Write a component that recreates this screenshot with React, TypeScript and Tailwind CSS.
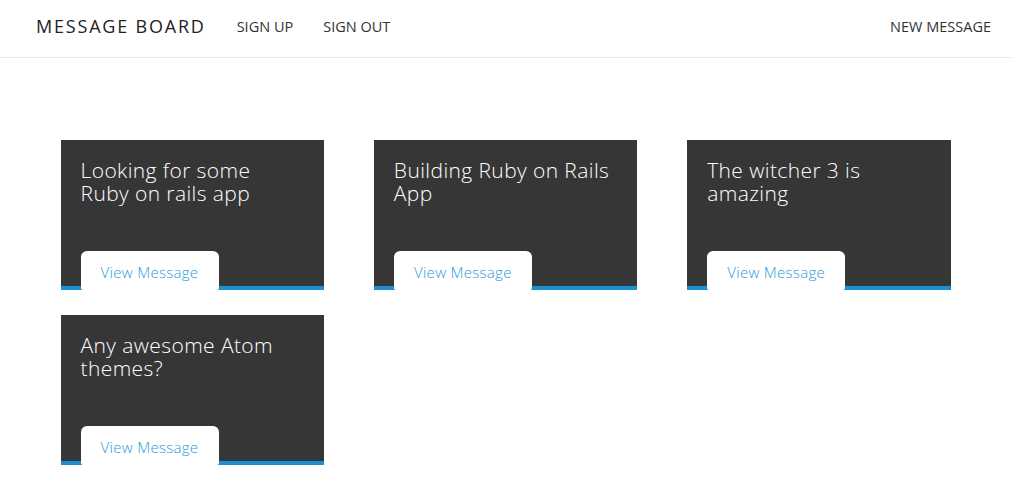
const messages = [
  "Looking for some Ruby on rails app",
  "Building Ruby on Rails App",
  "The witcher 3 is amazing",
  "Any awesome Atom themes?",
];

function MessageCard({ title }: { title: string }) {
  return (
    <div className="h-[150px] bg-[#363636] border-b-4 border-[#1b8fd2] flex flex-col justify-between px-5 pt-[19px]">
      <h2 className="text-[21px] leading-[23px] tracking-[0.4px] font-light text-white">{title}</h2>
      <a className="self-start -mb-1 w-[138px] h-[39px] pt-[3px] bg-white rounded-t-[6px] rounded-b-[2px] flex items-center justify-center text-[15px] tracking-[0.3px] font-light text-[#2a9bd9]">
        View Message
      </a>
    </div>
  );
}

export default function App() {
  return (
    <div className="min-h-screen bg-white" style={{ fontFamily: "'Open Sans', Lato, sans-serif" }}>
      <nav className="h-[58px] border-b border-[#e7e7e7] flex items-center px-9 pr-5 pb-1">
        <div className="text-[18px] tracking-[1.8px] text-[#222] mr-[31px]">MESSAGE BOARD</div>
        <div className="flex gap-[30px] text-[14.5px] text-[#333]">
          <span>SIGN UP</span>
          <span>SIGN OUT</span>
        </div>
        <div className="ml-auto text-[14.5px] text-[#333]">NEW MESSAGE</div>
      </nav>
      <div className="w-[890px] mx-auto pt-[82px] grid grid-cols-3 gap-x-[50px] gap-y-[25px]">
        {messages.map((m) => (
          <MessageCard key={m} title={m} />
        ))}
      </div>
    </div>
  );
}
